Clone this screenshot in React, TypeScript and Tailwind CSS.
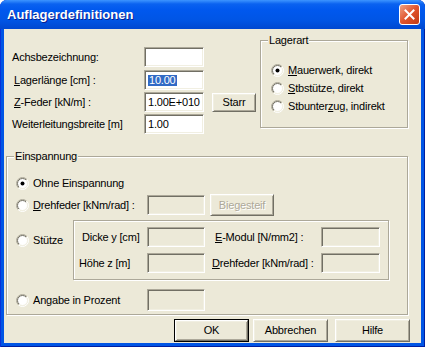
import type { ReactNode } from "react";

const FIELD =
  "border border-t-[#aca899] border-l-[#aca899] border-b-white border-r-white shadow-[inset_1px_1px_0_#716f64,inset_-1px_-1px_0_#f1efe2] pl-[3px] flex items-center leading-none";

function Field({ className, children }: { className: string; children?: ReactNode }) {
  return <div className={`${FIELD} ${className}`}>{children}</div>;
}

function Radio({ checked = false }: { checked?: boolean }) {
  return (
    <svg width="13" height="13" viewBox="0 0 13 13" className="shrink-0">
      <defs>
        <linearGradient id="ro" x1="0" y1="0" x2="1" y2="1">
          <stop offset="0.5" stopColor="#aca899" />
          <stop offset="0.5" stopColor="#ffffff" />
        </linearGradient>
        <linearGradient id="ri" x1="0" y1="0" x2="1" y2="1">
          <stop offset="0.5" stopColor="#716f64" />
          <stop offset="0.5" stopColor="#f1efe2" />
        </linearGradient>
      </defs>
      <circle cx="6.5" cy="6.5" r="6" fill="none" stroke="url(#ro)" strokeWidth="1" />
      <circle cx="6.5" cy="6.5" r="5" fill="#fff" stroke="url(#ri)" strokeWidth="1" />
      {checked && <circle cx="6.5" cy="6.5" r="2" fill="#000" />}
    </svg>
  );
}

function Btn({ children, primary, disabled, className }: { children: ReactNode; primary?: boolean; disabled?: boolean; className: string }) {
  const inner = (
    <div className="flex h-full w-full items-center justify-center border border-t-white border-l-white border-b-[#716f64] border-r-[#716f64] shadow-[inset_1px_1px_0_#f1efe2,inset_-1px_-1px_0_#aca899]">
      <span className={disabled ? "text-[#aca899] [text-shadow:1px_1px_0_#fff]" : ""}>{children}</span>
    </div>
  );
  return primary ? (
    <div className={`border border-black ${className}`}>{inner}</div>
  ) : (
    <div className={className}>{inner}</div>
  );
}

function Group({ label, className, children }: { label?: string; className: string; children?: ReactNode }) {
  return (
    <div className={`relative border border-[#aca899] shadow-[inset_1px_1px_0_#fff,1px_1px_0_#fff] ${className}`}>
      {label && (
        <span className="absolute -top-[8px] left-[7px] bg-[#ece9d8] px-[1px] leading-[14px]">{label}</span>
      )}
      {children}
    </div>
  );
}

export default function App() {
  return (
    <div className="h-[347px] w-[425px] bg-white font-['Liberation_Sans',Arial,sans-serif] text-[11px] tracking-[-0.2px] text-black">
      <div className="flex h-full w-full flex-col overflow-hidden rounded-t-[7px] bg-[#0055e5] shadow-[inset_1px_0_0_#0831d9,inset_-1px_0_0_#001ea0,inset_0_-1px_0_#001ea0]">
        {/* title bar */}
        <div className="flex h-[29px] shrink-0 items-center justify-between bg-[linear-gradient(to_bottom,#3d95ff_0px,#0a62f0_4px,#0058ee_10px,#0055e5_20px,#0048d0_29px)] pl-[7px] pr-[5px]">
          <span className="text-[13px] font-bold tracking-normal text-white [text-shadow:1px_1px_0_#0a1f8f]">Auflagerdefinitionen</span>
          <div className="flex h-[21px] w-[21px] items-center justify-center rounded-[3px] border border-white bg-[linear-gradient(135deg,#f0a283,#e0542d_50%,#c23a14)]">
            <svg width="11" height="11" viewBox="0 0 11 11">
              <path d="M1.5 1.5 L9.5 9.5 M9.5 1.5 L1.5 9.5" stroke="#fff" strokeWidth="2" strokeLinecap="square" />
            </svg>
          </div>
        </div>

        {/* body */}
        <div className="mx-[4px] flex h-[314px] flex-col bg-[#ece9d8]">
          <div className="mt-[11px] flex">
            <div className="ml-[8px] flex w-[248px] flex-col pt-[7px]">
              <div className="flex h-[20px] items-center">
                <span className="w-[132px]">Achsbezeichnung:</span>
                <Field className="h-[20px] w-[60px] bg-white" />
              </div>
              <div className="mt-[3px] flex h-[20px] items-center">
                <span className="w-[132px] pl-[2px]"><u>L</u>agerlänge [cm] :</span>
                <Field className="h-[20px] w-[60px] bg-white">
                  <span className="bg-[#316ac5] px-[1px] text-white">10.00</span>
                </Field>
              </div>
              <div className="mt-[2px] flex h-[20px] items-center">
                <span className="w-[132px] pl-[2px]"><u>Z</u>-Feder [kN/m] :</span>
                <Field className="h-[20px] w-[60px] bg-white">1.00E+010</Field>
                <Btn className="ml-[8px] h-[19px] w-[44px]">Starr</Btn>
              </div>
              <div className="mt-[2px] flex h-[20px] items-center">
                <span className="w-[132px]">Weiterleitungsbreite [m]</span>
                <Field className="h-[20px] w-[60px] bg-white">1.00</Field>
              </div>
            </div>

            <Group label="Lagerart" className="h-[88px] w-[148px]">
              <div className="flex flex-col pl-[10px] pt-[20px]">
                <div className="flex h-[18px] items-center gap-[4px]">
                  <Radio checked />
                  <span><u>M</u>auerwerk, direkt</span>
                </div>
                <div className="flex h-[18px] items-center gap-[4px]">
                  <Radio />
                  <span><u>S</u>tbstütze, direkt</span>
                </div>
                <div className="flex h-[18px] items-center gap-[4px]">
                  <Radio />
                  <span>Stbunter<u>z</u>ug, indirekt</span>
                </div>
              </div>
            </Group>
          </div>

          <Group label="Einspannung" className="ml-[2px] mt-[22px] h-[159px] w-[402px]">
            <div className="flex flex-col pl-[9px] pt-[16px]">
              <div className="flex h-[20px] items-center gap-[4px]">
                <Radio checked />
                <span>Ohne Einspannung</span>
              </div>
              <div className="mt-[1px] flex h-[22px] items-center">
                <Radio />
                <span className="ml-[4px] w-[114px]"><u>D</u>rehfeder [kNm/rad] :</span>
                <Field className="h-[20px] w-[58px]" />
                <Btn disabled className="ml-[5px] h-[22px] w-[64px]">Biegesteif</Btn>
              </div>
              <div className="mt-[4px] flex">
                <div className="flex h-[40px] w-[57px] items-center gap-[4px]">
                  <Radio />
                  <span>Stütze</span>
                </div>
                <Group className="h-[60px] w-[316px]">
                  <div className="flex flex-col gap-[6px] pt-[6px]">
                    <div className="flex h-[20px] items-center">
                      <span className="w-[73px] pl-[8px]">Dicke y [cm]</span>
                      <Field className="h-[20px] w-[58px]" />
                      <span className="w-[116px] pl-[10px]"><u>E</u>-Modul [N/mm2] :</span>
                      <Field className="h-[20px] w-[59px]" />
                    </div>
                    <div className="flex h-[20px] items-center">
                      <span className="w-[73px] pl-[5px]">Höhe z [m]</span>
                      <Field className="h-[20px] w-[58px]" />
                      <span className="w-[116px] pl-[7px]"><u>D</u>rehfeder [kNm/rad] :</span>
                      <Field className="h-[20px] w-[59px]" />
                    </div>
                  </div>
                </Group>
              </div>
              <div className="mt-[9px] flex h-[22px] items-center">
                <Radio />
                <span className="ml-[4px] w-[114px]">Angabe in Prozent</span>
                <Field className="h-[22px] w-[58px]" />
              </div>
            </div>
          </Group>

          <div className="ml-[170px] mt-[4px] flex">
            <Btn primary className="h-[23px] w-[75px]">OK</Btn>
            <Btn className="ml-[4px] h-[23px] w-[75px]">Abbrechen</Btn>
            <Btn className="ml-[7px] h-[23px] w-[75px]">Hilfe</Btn>
          </div>
        </div>
      </div>
    </div>
  );
}
